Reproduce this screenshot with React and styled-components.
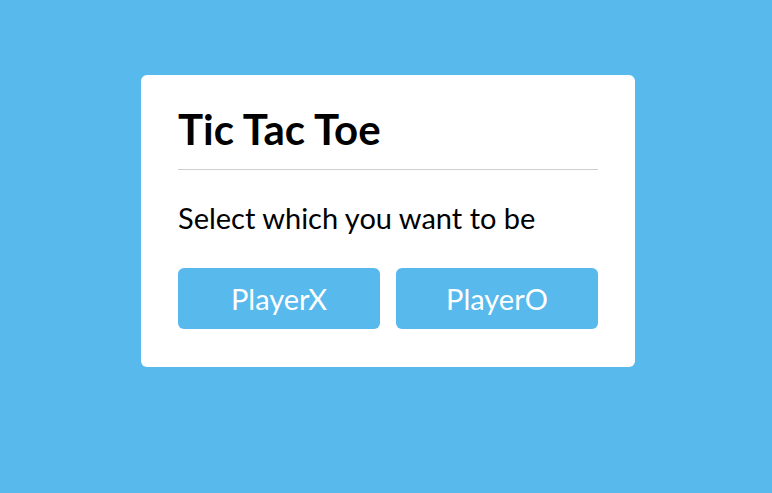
import React from 'react';
import styled, { createGlobalStyle } from 'styled-components';

const GlobalStyle = createGlobalStyle`
    body {
        margin: 0;
        background: #57b9ec;
        font-family: "Comic Sans MS", "Lato", "DejaVu Sans", sans-serif;
    }
`;

const Page = styled.div`
    display: flex;
    justify-content: center;
    align-items: flex-start;
    padding: 75px 0 0 4px;
    min-height: 100vh;
    box-sizing: border-box;
`;

const Card = styled.div`
    width: 494px;
    box-sizing: border-box;
    padding: 33px 37px 38px;
    background: #fff;
    border-radius: 6px;
`;

const Header = styled.div`
    padding-bottom: 19px;
    border-bottom: 1px solid #cfcfcf;
`;

const Title = styled.h1`
    margin: 0;
    font-size: 42px;
    line-height: 42px;
    font-weight: 700;
    color: #000;
`;

const Prompt = styled.p`
    margin: 33px 0 36px;
    font-size: 29px;
    line-height: 29px;
    color: #000;
`;

const Choices = styled.div`
    display: grid;
    grid-template-columns: 1fr 1fr;
    gap: 16px;
`;

const PlayerButton = styled.button`
    all: unset;
    display: flex;
    align-items: center;
    justify-content: center;
    height: 61px;
    border-radius: 6px;
    background: #57b9ec;
    color: #fff;
    font-size: 29px;
    cursor: pointer;
`;

export default function App() {
    return (
        <>
            <GlobalStyle />
            <Page>
                <Card>
                    <Header>
                        <Title>Tic Tac Toe</Title>
                    </Header>
                    <Prompt>Select which you want to be</Prompt>
                    <Choices>
                        <PlayerButton>PlayerX</PlayerButton>
                        <PlayerButton>PlayerO</PlayerButton>
                    </Choices>
                </Card>
            </Page>
        </>
    );
}
